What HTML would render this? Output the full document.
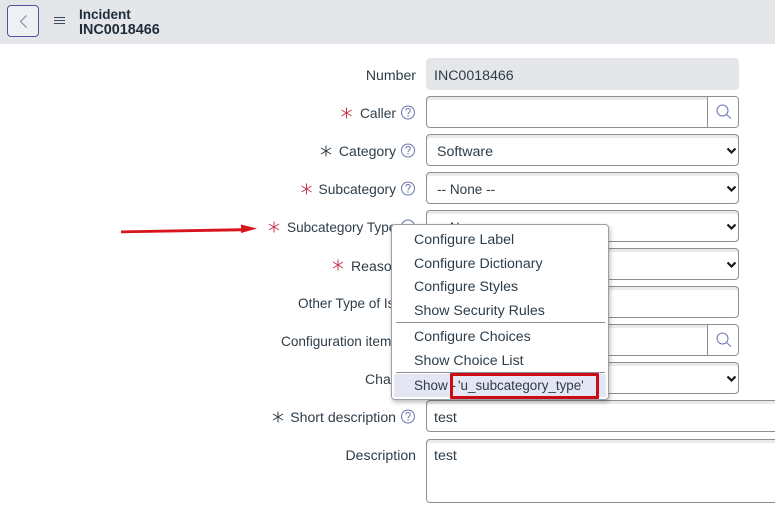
<!DOCTYPE html>
<html>
<head>
<meta charset="utf-8">
<style>
html,body{margin:0;padding:0}
body{width:775px;height:510px;position:relative;overflow:hidden;background:#fff;font-family:"Liberation Sans",sans-serif;font-size:14px;color:#293e40}
.a{position:absolute}
.hdr{left:0;top:0;width:775px;height:44px;background:#e4e6e9}
.lb{position:absolute;text-align:right;white-space:nowrap;line-height:20px;color:#2e3d49;font-size:14.1px}
.f{position:absolute;left:426px;width:311px;height:30px;border:1px solid #8a8f94;border-radius:4px;background:#fff;box-shadow:inset 0 3px 0 #e9ebec}
.v{position:absolute;line-height:20px;color:#2e3d49;font-size:14.2px;white-space:nowrap}
.s{position:absolute;left:707px;width:30px;height:30px;border-left:1px solid #8a8f94;background:#fff;border-radius:0 3px 3px 0}
.m{position:absolute;left:414px;line-height:20px;white-space:nowrap;font-size:14.2px;color:#2e3d49}
svg{position:absolute;overflow:visible}
</style>
</head>
<body>
<div class="a hdr"></div>
<div class="a" style="left:7px;top:5px;width:30px;height:30px;border:1px solid #4f52a0;border-radius:4px;background:#eef0f3"></div>
<svg style="left:0;top:0" width="70" height="44"><path d="M26.500 15.500L20.500 21.500L26.500 27.500" fill="none" stroke="#7a7f9f" stroke-width="1"/><path d="M54 17.500H65M54 20.500H65M54 23.500H65" fill="none" stroke="#3b4a57" stroke-width="1"/></svg>
<div class="a" style="left:79px;top:7px;font-weight:bold;line-height:15px;color:#1f2d3a;white-space:nowrap"><div style="font-size:13.500px">Incident</div><div style="font-size:14.400px;position:relative;top:1px">INC0018466</div></div>

<div class="a" style="left:426px;top:58px;width:313px;height:32px;background:#e4e6e9;border-radius:4px"></div>
<div class="v" style="left:434px;top:66px">INC0018466</div>
<div class="lb" style="right:359px;top:65px">Number</div>

<div class="f" style="top:96px"></div><div class="s" style="top:97px"></div>
<div class="f" style="top:134px"></div>
<div class="f" style="top:172px"></div>
<div class="f" style="top:210px"></div>
<div class="f" style="top:248px"></div>
<div class="f" style="top:286px"></div>
<div class="f" style="top:324px"></div><div class="s" style="top:325px"></div>
<div class="f" style="top:362px"></div>
<div class="f" style="top:400px;width:360px"></div>
<div class="f" style="top:439px;width:360px;height:62px"></div>

<div class="v" style="left:437px;top:142px">Software</div>
<div class="v" style="left:437px;top:180px;font-size:13.6px">-- None --</div>
<div class="v" style="left:437px;top:218px;font-size:13.6px">-- None --</div>
<div class="v" style="left:434px;top:408px">test</div>
<div class="v" style="left:434px;top:446px">test</div>

<div class="lb" style="right:379px;top:104px;font-size:13.8px">Caller</div>
<div class="lb" style="right:379px;top:141px">Category</div>
<div class="lb" style="right:379px;top:180px;font-size:13.8px">Subcategory</div>
<div class="lb" style="left:287px;top:218px;font-size:13.6px">Subcategory Type</div>
<div class="lb" style="left:351px;top:256px">Reason</div>
<div class="lb" style="left:298px;top:294px;font-size:13.6px">Other Type of Issue</div>
<div class="lb" style="left:281px;top:332px;font-size:13.6px">Configuration item</div>
<div class="lb" style="left:365px;top:369px">Channel</div>
<div class="lb" style="right:379px;top:407px">Short description</div>
<div class="lb" style="right:359px;top:445px">Description</div>

<svg style="left:0;top:0" width="775" height="510">
<g fill="none" stroke="#c8354f" stroke-width="1">
<path d="M346.500 107.500V118.500M341.500 110L351.500 116M351.500 110L341.500 116"/>
<path d="M306.500 183.500V194.500M301.500 186L311.500 192M311.500 186L301.500 192"/>
<path d="M274 221.500V232.500M269 224L279 230M279 224L269 230"/>
<path d="M338 259.500V270.500M333 262L343 268M343 262L333 268"/>
</g>
<g fill="none" stroke="#2e3d49" stroke-width="1">
<path d="M326 145.500V156.500M321 148L331 154M331 148L321 154"/>
<path d="M278 411.500V422.500M273 414L283 420M283 414L273 420"/>
</g>
<g fill="none" stroke="#6a76ac" stroke-width="1">
<circle cx="408" cy="112.500" r="6.500"/><circle cx="408" cy="150.500" r="6.500"/><circle cx="408" cy="188.500" r="6.500"/><circle cx="408" cy="226.500" r="6.500"/><circle cx="408" cy="416.500" r="6.500"/>
<path d="M405.800 110.500C406 107.800 410.300 107.800 410.300 110.500C410.300 112.300 408 112.300 408 114.300M405.800 148.500C406 145.800 410.300 145.800 410.300 148.500C410.300 150.300 408 150.300 408 152.300M405.800 186.500C406 183.800 410.300 183.800 410.300 186.500C410.300 188.300 408 188.300 408 190.300M405.800 414.500C406 411.800 410.300 411.800 410.300 414.500C410.300 416.300 408 416.300 408 418.300"/>
</g>
<g fill="#6a76ac"><circle cx="408" cy="116" r=".7"/><circle cx="408" cy="154" r=".7"/><circle cx="408" cy="192" r=".7"/><circle cx="408" cy="420" r=".7"/></g>
<g fill="none" stroke="#6a76ac" stroke-width="1">
<circle cx="722.500" cy="110.500" r="5.500"/><path d="M726.500 114.500L731 118.500"/>
<circle cx="722.500" cy="338.500" r="5.500"/><path d="M726.500 342.500L731 346.500"/>
</g>
<g fill="none" stroke="#14181c" stroke-width="2.200">
<path d="M727.500 148.500L731.500 152.500L735.500 148.500"/>
<path d="M727.500 186.500L731.500 190.500L735.500 186.500"/>
<path d="M727.500 224.500L731.500 228.500L735.500 224.500"/>
<path d="M727.500 262.500L731.500 266.500L735.500 262.500"/>
<path d="M727.500 376.500L731.500 380.500L735.500 376.500"/>
</g>
<path d="M121 230.500L241 228.200V224.500L257 228.500L241 233V231.200L121 233.200Z" fill="#d8141c"/>
</svg>

<div class="a" style="left:391px;top:224px;width:216px;height:174px;background:#fff;border:1px solid #9aa0a6;border-radius:4px;box-shadow:1px 2px 5px rgba(0,0,0,.28)"></div>
<div class="a" style="left:396px;top:322px;width:209px;height:1px;background:#8a8f94"></div>
<div class="a" style="left:396px;top:372px;width:209px;height:1px;background:#8a8f94"></div>
<div class="a" style="left:394px;top:374px;width:212px;height:23px;background:#e4e6f3;border-radius:2px"></div>
<div class="m" style="top:230px">Configure Label</div>
<div class="m" style="top:254px">Configure Dictionary</div>
<div class="m" style="top:277px">Configure Styles</div>
<div class="m" style="top:301px">Show Security Rules</div>
<div class="m" style="top:327px">Configure Choices</div>
<div class="m" style="top:351px">Show Choice List</div>
<div class="m" style="top:376px;font-size:13.5px">Show -</div>
<div class="m" style="top:376px;left:458px;font-size:13.4px">'u_subcategory_type'</div>
<div class="a" style="left:450px;top:373px;width:143px;height:20px;border:3px solid #cc0a14;border-radius:1px"></div>
</body>
</html>
